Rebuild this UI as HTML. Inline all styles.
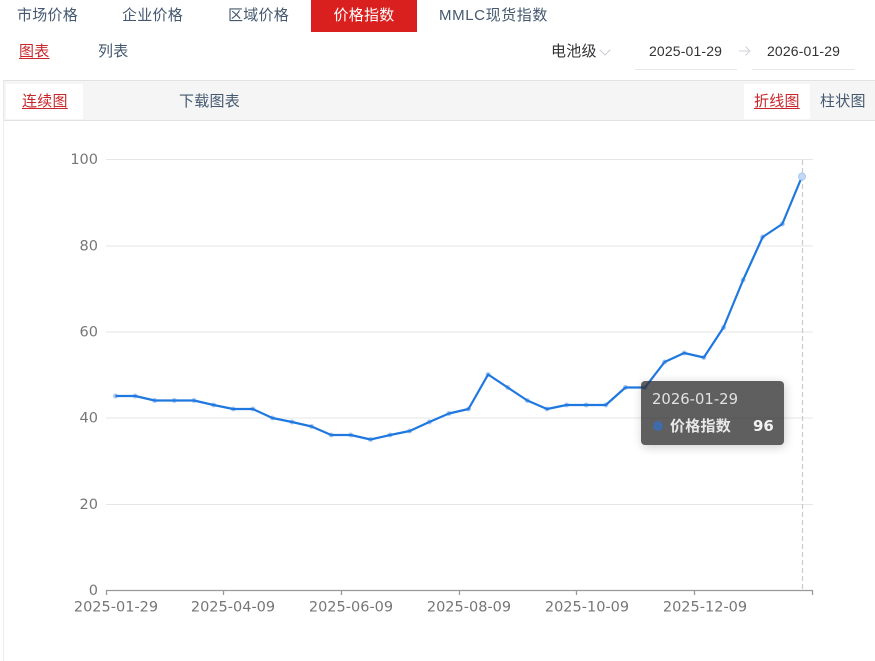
<!DOCTYPE html>
<html lang="zh-CN"><head><meta charset="utf-8"><style>
*{box-sizing:border-box}
html,body{margin:0;padding:0;background:#fff}
body{width:875px;height:661px;position:relative;overflow:hidden;font-family:"Liberation Sans","Noto Sans CJK SC",sans-serif;font-size:15px;letter-spacing:.25px;color:#44586f}
.a{position:absolute;white-space:nowrap;line-height:20px}
.r{color:#c8262b;text-decoration:underline;text-underline-offset:2px}
svg{position:absolute;left:0;top:0}
svg text{font-family:"DejaVu Sans","Noto Sans CJK SC",sans-serif;font-size:14.5px;fill:#767676;letter-spacing:0}
</style></head><body>
<div class="a" style="left:17px;top:6px">市场价格</div>
<div class="a" style="left:122px;top:6px">企业价格</div>
<div class="a" style="left:228px;top:6px">区域价格</div>
<div class="a" style="left:311px;top:0;width:106px;height:32px;background:#d9201f;color:#fff;text-align:center;line-height:32px">价格指数</div>
<div class="a" style="left:439px;top:6px;letter-spacing:.6px">MMLC现货指数</div>
<div class="a r" style="left:19px;top:42px">图表</div>
<div class="a" style="left:98px;top:42px">列表</div>
<div class="a" style="left:551px;top:42px;color:#333">电池级</div>
<div style="position:absolute;left:601px;top:46px;width:8px;height:8px;border-right:1px solid #c8ccd2;border-bottom:1px solid #c8ccd2;transform:rotate(45deg)"></div>
<svg width="875" height="661" viewBox="0 0 875 661" style="z-index:1"><path d="M739 51H750M745.500 46.500L750 51L745.500 55.500" stroke="#cfd2d6" stroke-width="1" fill="none"/></svg>
<div class="a" style="left:649px;top:41px;font-size:14px;color:#333;letter-spacing:.15px">2025-01-29</div>
<div class="a" style="left:767px;top:41px;font-size:14px;color:#333;letter-spacing:.15px">2026-01-29</div>
<div style="position:absolute;left:635px;top:69px;width:102px;height:1px;background:#e8e8e8"></div>
<div style="position:absolute;left:752px;top:69px;width:103px;height:1px;background:#e8e8e8"></div>
<div style="position:absolute;left:3px;top:80px;width:872px;height:41px;background:#f5f5f5;border-top:1px solid #e2e2e2;border-bottom:1px solid #e2e2e2;border-left:1px solid #e8e8e8"></div>
<div style="position:absolute;left:3px;top:121px;width:1px;height:540px;background:#ececec"></div>
<div style="position:absolute;left:6px;top:84px;width:77px;height:35px;background:#fff"></div>
<div style="position:absolute;left:744px;top:84px;width:66px;height:35px;background:#fff"></div>
<div class="a r" style="left:22px;top:92px">连续图</div>
<div class="a" style="left:179px;top:92px">下载图表</div>
<div class="a r" style="left:754px;top:92px">折线图</div>
<div class="a" style="left:820px;top:92px">柱状图</div>
<svg width="875" height="661" viewBox="0 0 875 661">
<path d="M106 159.500H813M106 246H813M106 332H813M106 418H813M106 504.500H813" stroke="#e6e6e6" stroke-width="1" fill="none"/>
<g text-anchor="end"><text x="98" y="164">100</text><text x="98" y="250.500">80</text><text x="98" y="336.500">60</text><text x="98" y="422.500">40</text><text x="98" y="509">20</text><text x="98" y="595">0</text></g>
<path d="M106 590.500H812.500M106.500 590V595M223.500 590V595M341.500 590V595M459.500 590V595M576.500 590V595M694.500 590V595M812.500 590V595" stroke="#999" stroke-width="1.300" fill="none"/>
<g text-anchor="middle"><text x="116" y="611.500">2025-01-29</text><text x="233" y="611.500">2025-04-09</text><text x="351" y="611.500">2025-06-09</text><text x="469" y="611.500">2025-08-09</text><text x="587" y="611.500">2025-10-09</text><text x="705" y="611.500">2025-12-09</text></g>
<path d="M802.500 160V590" stroke="#c9c9c9" stroke-width="1.200" stroke-dasharray="5 3" fill="none"/>
<g fill="#a9c8f0"><circle cx="115.500" cy="396" r="2.500"/><circle cx="135.100" cy="396" r="2.500"/><circle cx="154.700" cy="400.500" r="2.500"/><circle cx="174.300" cy="400.500" r="2.500"/><circle cx="194" cy="400.500" r="2.500"/><circle cx="213.600" cy="405" r="2.500"/><circle cx="233.200" cy="409" r="2.500"/><circle cx="252.800" cy="409" r="2.500"/><circle cx="272.400" cy="418" r="2.500"/><circle cx="292" cy="422" r="2.500"/><circle cx="311.600" cy="426.500" r="2.500"/><circle cx="331.200" cy="435" r="2.500"/><circle cx="350.800" cy="435" r="2.500"/><circle cx="370.500" cy="439.500" r="2.500"/><circle cx="390.100" cy="435" r="2.500"/><circle cx="409.700" cy="431" r="2.500"/><circle cx="429.300" cy="422" r="2.500"/><circle cx="448.900" cy="413.500" r="2.500"/><circle cx="468.500" cy="409" r="2.500"/><circle cx="488.100" cy="374.500" r="2.500"/><circle cx="507.700" cy="387.500" r="2.500"/><circle cx="527.300" cy="400.500" r="2.500"/><circle cx="547" cy="409" r="2.500"/><circle cx="566.600" cy="405" r="2.500"/><circle cx="586.200" cy="405" r="2.500"/><circle cx="605.800" cy="405" r="2.500"/><circle cx="625.400" cy="387.500" r="2.500"/><circle cx="645" cy="387.500" r="2.500"/><circle cx="664.600" cy="362" r="2.500"/><circle cx="684.200" cy="353" r="2.500"/><circle cx="703.800" cy="357.500" r="2.500"/><circle cx="723.500" cy="327.500" r="2.500"/><circle cx="743.100" cy="280" r="2.500"/><circle cx="762.700" cy="237" r="2.500"/><circle cx="782.300" cy="224" r="2.500"/></g>
<path d="M115.500 396L135.100 396L154.700 400.500L174.300 400.500L194 400.500L213.600 405L233.200 409L252.800 409L272.400 418L292 422L311.600 426.500L331.200 435L350.800 435L370.500 439.500L390.100 435L409.700 431L429.300 422L448.900 413.500L468.500 409L488.100 374.500L507.700 387.500L527.300 400.500L547 409L566.600 405L586.200 405L605.800 405L625.400 387.500L645 387.500L664.600 362L684.200 353L703.800 357.500L723.500 327.500L743.100 280L762.700 237L782.300 224L802 176.500" fill="none" stroke="#1f78e0" stroke-width="2.200" stroke-linejoin="round"/>
<circle cx="802" cy="176.500" r="3.500" fill="#c4d9f5" stroke="#a9c8f0" stroke-width="1"/>
</svg>
<div style="position:absolute;left:641px;top:381px;width:143px;height:64px;background:rgba(50,50,50,.78);border-radius:4px;box-shadow:1px 2px 10px rgba(0,0,0,.2)"></div>
<div class="a" style="left:652px;top:390px;font-family:'DejaVu Sans',sans-serif;font-size:14.800px;letter-spacing:0;color:#e2e2e2">2026-01-29</div>
<div style="position:absolute;left:653px;top:421px;width:10px;height:10px;border-radius:50%;background:#3f6ba8"></div>
<div class="a" style="left:670px;top:417px;font-size:15px;font-weight:700;color:#e8e8e8">价格指数</div>
<div class="a" style="left:753px;top:416px;font-family:'DejaVu Sans',sans-serif;font-size:15px;font-weight:700;letter-spacing:0;color:#f2f2f2">96</div>
</body></html>
